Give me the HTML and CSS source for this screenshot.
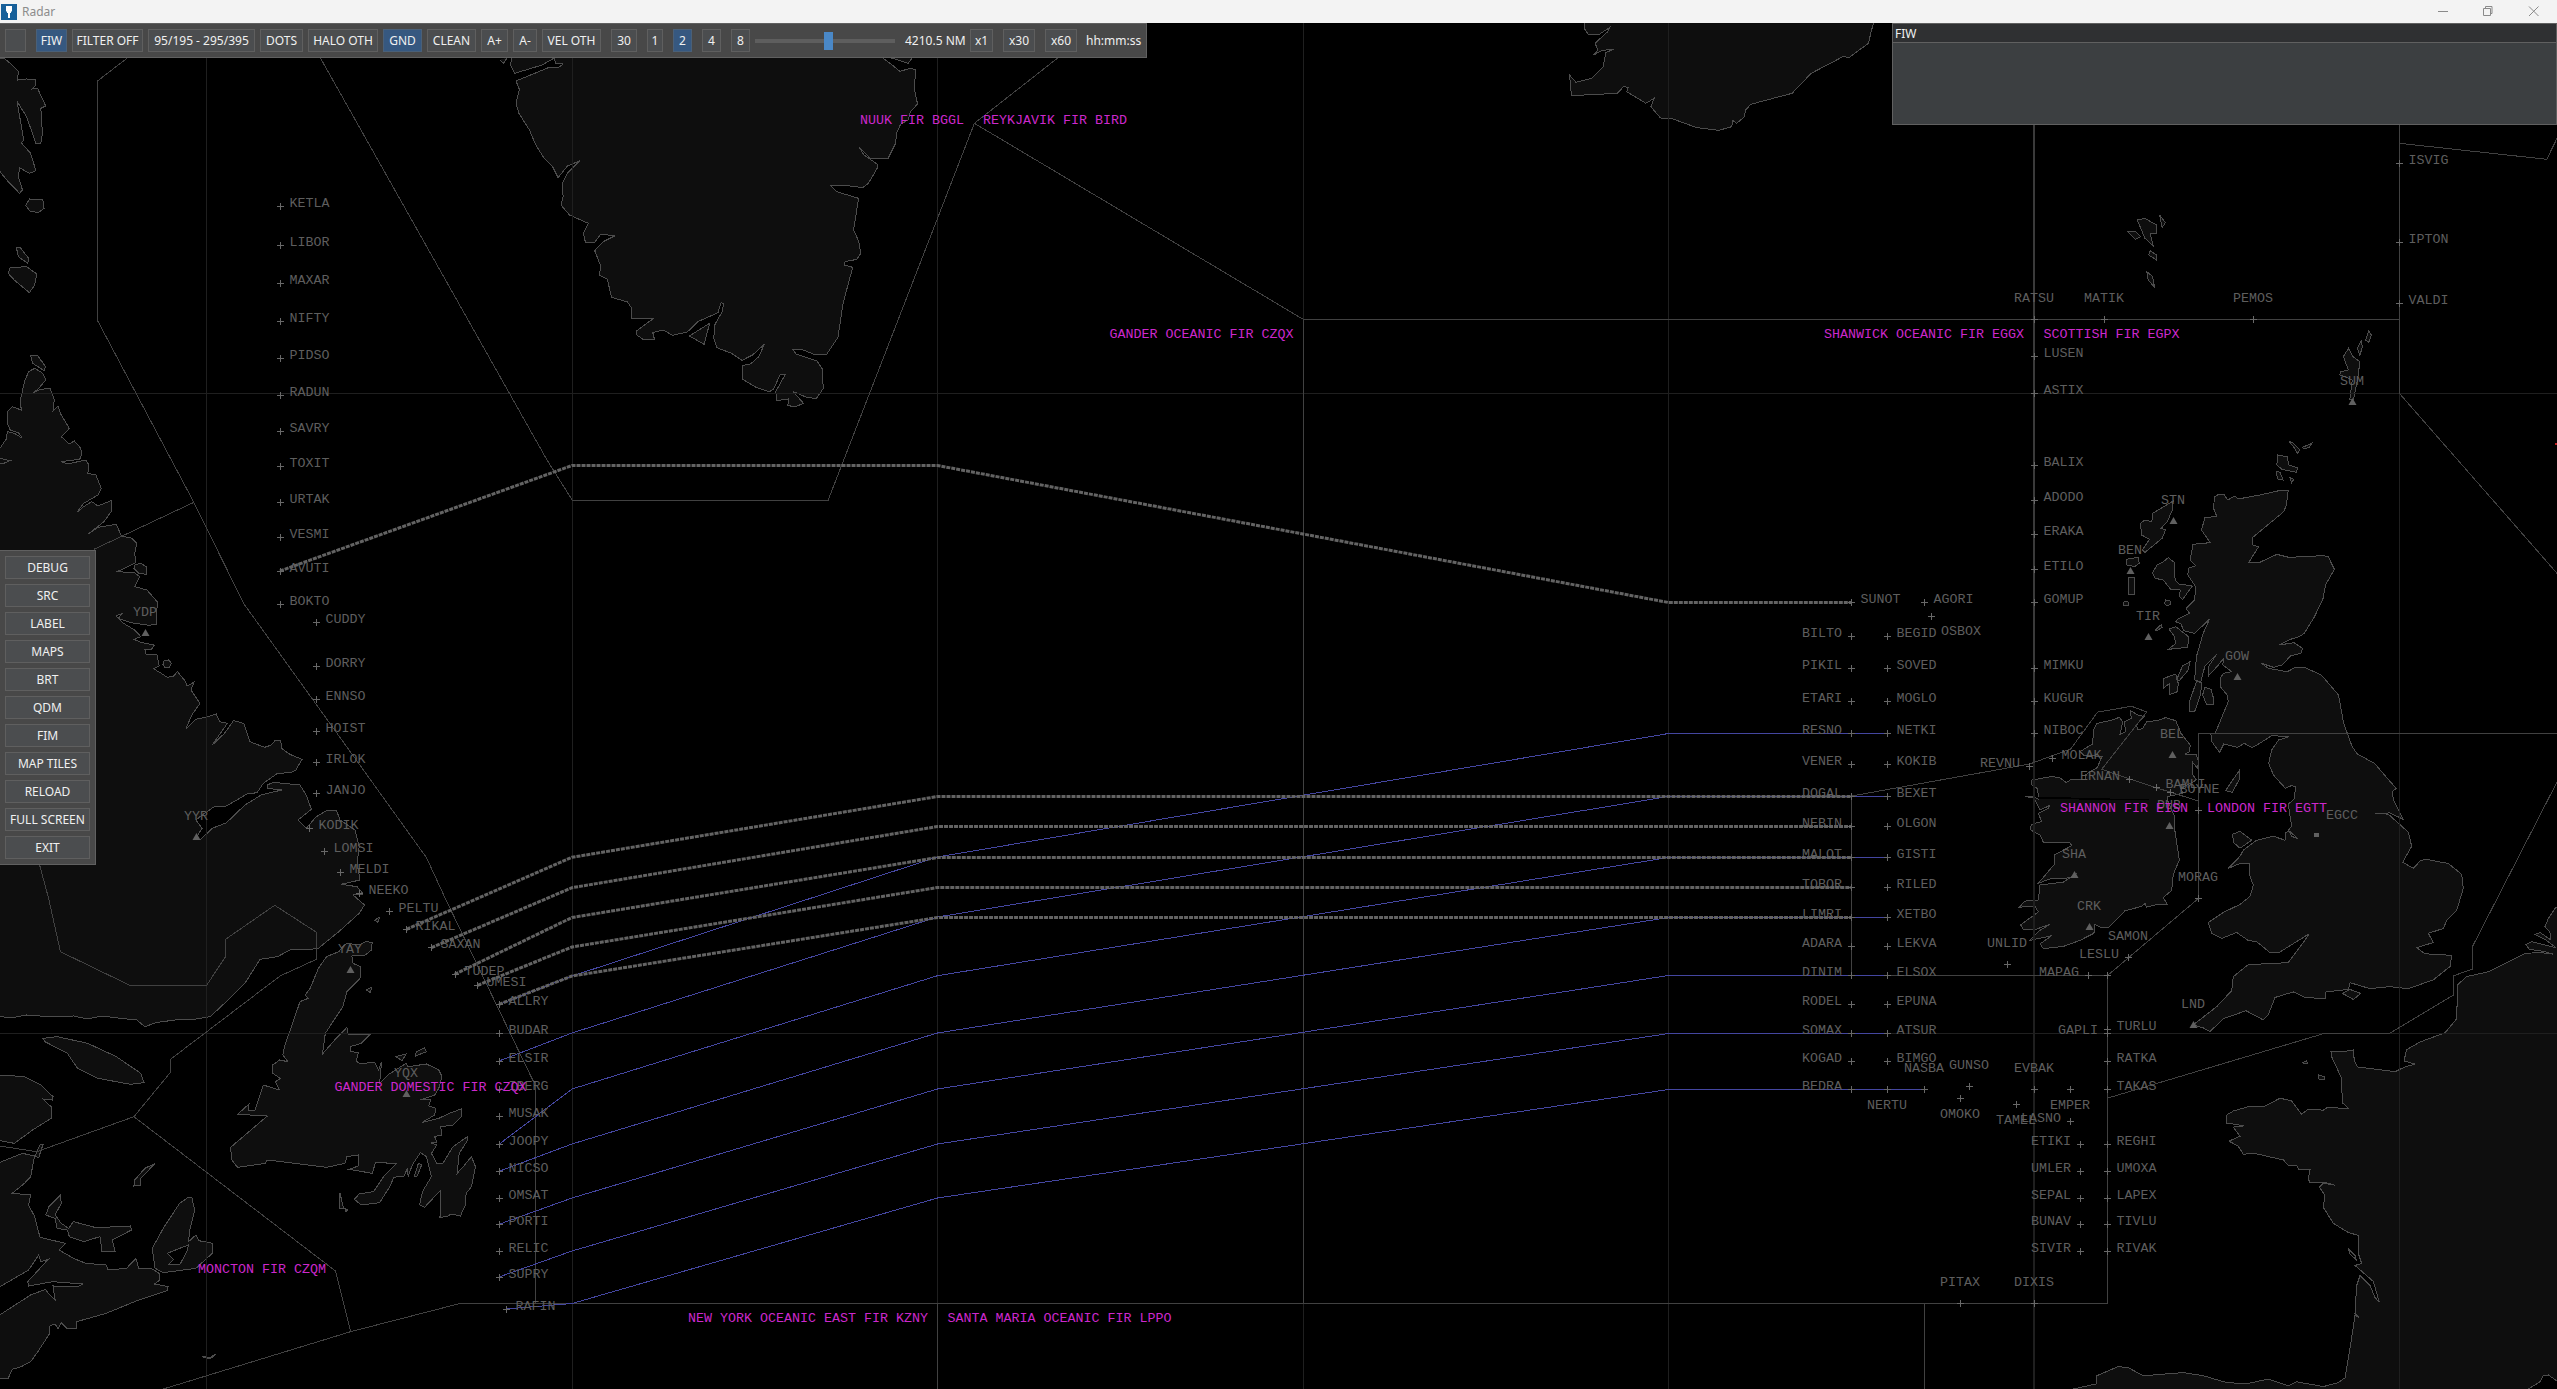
FILE: index.html
```html
<!DOCTYPE html>
<html lang="en">
<head>
<meta charset="utf-8">
<title>Radar</title>
<link rel="stylesheet" href="styles.css">
</head>
<body>
<header class="titlebar">
  <svg class="app-icon" width="16" height="16" viewBox="0 0 16 16"><rect width="16" height="16" fill="#17609a"/><path d="M5 2h6v5l-1 1v1H9v5H7V9H6V8L5 7z" fill="#fff"/></svg>
  <span class="title">Radar</span>
  <svg class="win-buttons" width="104" height="20" viewBox="0 0 104 20" fill="none" stroke="#8a8a8a"><path d="M0 9.500H10"/><path d="M45.500 6.500h7v7h-7z M47.500 6V4.500h6.500v7H53"/><path d="M91 4.500l9.500 9.500M100.500 4.500L91 14"/></svg>
</header>
<main class="scope">
<svg class="map" width="2557" height="1389" viewBox="0 0 2557 1389">
  <g class="land">
    <g transform="scale(.40816 .33333)">
      <path d="M-20 175L10 175 30 195 45 215 43 240 65 237 88 240 88 255 78 267 92 265 112 318 100 325 104 400 100 430 88 430 65 350 42 305 58 420 52 428 75 460 88 512 72 520 48 503 45 530 55 570 48 580 20 545 0 515-20 500"/>
      <path d="M72 597L105 600 108 625 95 637 75 635 63 617z M40 742L50 743 70 775 68 790 45 770z M25 803L65 800 90 822 85 855 72 878 35 840 20 820z M75 1067L92 1067 112 1100 108 1112 80 1090z"/>
    </g>
    <g transform="translate(0 440) scale(.40816 .33333)">
      <path d="M-20 60L0 55 25 62 5 72-20 70 M-20 25L0 25 8 10 15-2 18-25 35-20 55-5 45-22 25-30 18-50 18-85 30-100 52-90 50-120 60-175 70-205 85-215 105-200 112-180 95-155 82-142 100-152 123-155 133-120 130-88 142-102 150-75 170-35 150-10 170 12 182 3 198 25 200 45 195 58 150 65 165 72 210 60 218 75 215 100 235 105 248 145 240 165 205 190 190 215 205 200 225 185 240 198 272 182 272 215 255 245 215 283 240 262 285 253 298 290 320 292 335 310 330 340 333 368 300 388 285 395 330 398 342 410 330 440 360 450 385 485 384 552 365 556 320 548 290 535 300 520 284 528 300 548 330 570 345 590 328 598 345 607 378 615 370 630 355 630 358 642 385 645 390 678 376 686 395 700 410 712 425 708 435 695 455 725 458 738 475 727 468 750 490 790 470 825 455 868 480 838 510 830 530 822 538 845 557 850 540 880 520 915 550 880 572 842 597 850 612 905 648 922 665 915 673 903 688 903 690 925 710 943 740 958 725 990 712 998 680 1000 645 1030 630 1058 605 1062 555 1098 525 1100 495 1125 480 1140 495 1165 480 1195 490 1200 520 1165 555 1148 600 1095 640 1065 690 1050 655 1045 655 1035 670 1027 735 1035 750 1065 763 1108 730 1140 750 1165 775 1130 800 1112 825 1113 833 1140 870 1170 880 1220 875 1270 882 1320 835 1333 875 1340 890 1362 865 1365 893 1395 880 1420 830 1475 780 1525 760 1528 710 1530 680 1550 637 1558 600 1630 550 1690 515 1730 480 1737 430 1740 385 1747 355 1760 335 1740 295 1735 250 1728 215 1737 180 1728 120 1730 65 1725 35 1732-20 1730"/>
      <path d="M330 375L345 370 358 380 358 403 340 400 328 385z M402 663L413 660 420 670 415 682 404 682 399 673z"/>
    </g>
    <g transform="translate(0 900) scale(.40816 .33333)">
      <path d="M800 170L830 155 840 140 850 130 880 135 895 125 912 127 910 150 895 165 862 168 865 190 883 200 882 235 850 275 840 320 797 400 790 462 820 420 850 382 853 405 908 402 885 430 858 440 858 455 878 457 873 483 880 490 918 488 928 510 935 485 930 550 950 525 995 490 1000 500 1045 492 1075 510 1083 530 1075 565 1065 585 1030 600 1055 600 1050 618 1068 625 1065 645 1035 667 1075 655 1105 638 1130 627 1130 650 1110 675 1080 680 1082 705 1065 710 1070 727 1055 728 1070 735 1057 760 1070 790 1085 790 1110 740 1145 710 1145 722 1125 760 1120 820 1135 800 1155 770 1165 800 1155 860 1142 880 1140 915 1128 948 1105 942 1095 950 1078 952 1080 870 1040 922 1028 915 1035 875 1057 830 1045 770 1030 758 1010 795 1000 830 998 805 990 828 965 832 955 860 930 908 885 915 868 898 880 882 915 875 940 830 972 790 920 788 912 820 855 808 878 798 878 765 850 770 845 790 800 802 735 792 655 780 650 790 582 802 568 780 565 742 655 648 582 643 610 612 608 632 625 630 645 555 685 570 675 545 687 535 668 520 668 495 685 480 705 485 693 465 697 440 735 305 755 295 748 285 760 265 780 205z"/>
      <path d="M105 415L140 410 215 430 285 470 345 520 353 548 320 553 240 535 190 505 165 460 110 425z M-20 525L0 525 60 530 100 555 130 590 128 600 105 597 125 620 125 655 80 690 35 730 0 722-20 722"/>
      <path d="M-20 785L0 787 55 760 85 768 75 830 60 850 30 880 75 885 70 915 85 950 98 1012 160 1030 145 1050 180 1075 210 1090 260 1095 265 1110 310 1105 333 1075 340 1105 370 1105 390 1120 392 1140 378 1152 412 1160 410 1172 340 1200 260 1240 188 1265 188 1285 165 1287 150 1268 142 1287 135 1272 122 1278 122 1300 90 1360 75 1385 52 1400 30 1408 20 1435-20 1435"/>
      <path class="water" d="M-20 1170L0 1160 70 1110 95 1065 100 1085 118 1078 68 1145 70 1158 130 1145 203 1152 190 1160 130 1158 135 1200 118 1180 112 1168 75 1185-20 1260"/>
      <path d="M148 885L150 910 135 945 150 970 168 985 180 965 235 983 320 978 322 990 275 1020 282 1055 250 1055 245 1010 205 1025 170 1010 165 990 140 985 135 955 112 945 120 920z M460 893L470 893 477 930 465 990 462 1025 480 1005 487 1022 520 1030 520 1060 480 1105 400 1118 380 1105 373 1045 400 985 440 910z"/>
      <path class="water" d="M410 1060L440 1045 462 1035 458 1055 440 1095 412 1095 425 1078z"/>
      <path d="M380 790L345 835 345 855 328 858 330 840 355 805z M833 880L842 925 832 925z M845 925L852 930 847 935z M970 470L995 462 985 482z M1020 455L1040 443 1045 455 1018 468z M918 60L930 52 925 68z M898 270L910 262 908 278z M495 1370L515 1372 530 1362 515 1376z M85 770L98 735 105 735 95 772z M1015 830L1025 790 1033 795 1022 828z"/>
    </g>
    <g transform="translate(500 0) scale(.42092 .33333)">
      <path d="M128 170L132 190 150 192 140 202 115 203 38 243 46 268 38 310 45 340 70 390 85 435 105 475 125 500 138 533 160 498 190 482 160 520 148 550 150 590 145 615 165 645 210 670 198 700 203 727 225 727 240 702 272 708 245 725 225 752 240 800 235 825 255 838 265 892 303 906 313 925 313 955 365 955 325 992 325 1005 340 1018 367 1018 363 998 388 990 410 1006 445 996 470 965 518 938 525 908 531 910 528 935 510 975 508 1015 515 1043 550 1060 575 1081 600 1065 628 1033 615 1070 595 1092 575 1097 575 1137 610 1163 640 1175 650 1168 665 1125 677 1125 655 1175 658 1202 685 1197 684 1217 702 1220 721 1210 697 1175 730 1193 752 1195 768 1165 765 1105 753 1083 703 1062 697 1050 720 1050 750 1065 775 1065 803 1012 815 910 838 802 818 795 820 785 848 778 857 760 852 723 840 690 852 595 800 575 785 557 825 557 862 563 875 550 897 503 897 493 865 465 852 440 880 475 922 475 940 430 942 400 952 372 970 360 975 335 992 312 984 265 988 210 975 205 950 214 930 193 905 170"/>
      <path d="M28 170L25 195 35 220 100 195 132 172 M0 180L8 190 18 172 M925 172L970 190 980 172 M498 970L450 1008 485 1033z"/>
    </g>
    <g transform="translate(1560 0) scale(.63584 .33333)">
      <path d="M40 60L38 85 45 105 60 105 78 83 75 95 55 130 60 150 53 165 65 152 85 147 72 158 68 200 50 235 25 247 15 225 18 287 90 280 100 260 107 262 105 275 135 310 148 295 143 320 158 354 175 355 215 383 250 391 270 380 272 362 278 370 290 350 292 330 300 313 345 290 365 280 395 220 445 170 455 172 485 130 490 90 495 60"/>
      <path d="M908 660L920 655 938 675 938 700 928 700 933 738 920 715z M893 695L905 695 913 710 905 718z M943 645L952 668 947 683z M928 752L938 765 938 780 926 765z M923 815L932 830 935 862 925 840z"/>
      <path d="M1272 993L1276 1005 1272 1027 1267 1020z M1260 1022L1262 1040 1258 1066 1254 1045z M1240 1045L1247 1070 1258 1085 1255 1130 1248 1200 1242 1200 1246 1140 1235 1130 1226 1125 1228 1115 1240 1110 1232 1070z"/>
    </g>
    <g transform="translate(2020 400) scale(.34247 .33333)">
      <path d="M800 1200L805 1160 792 1157 775 1165 740 1125 726 1090 735 1050 755 1020 785 1010 735 1007 700 1030 678 1043 655 1030 635 1042 595 1032 583 1057 560 1025 557 1000 570 1000 608 905 605 885 585 860 587 830 595 820 618 815 592 795 595 775 575 800 550 828 550 800 575 762 540 798 528 845 510 840 515 770 535 700 553 658 510 700 478 692 470 672 455 665 460 658 495 640 485 625 510 600 513 560 490 525 492 505 513 497 497 480 505 433 555 428 530 390 540 352 575 350 565 325 568 290 580 283 595 283 607 300 627 288 637 297 700 285 765 270 783 272 778 315 770 335 680 412 680 435 697 440 668 487 700 487 750 463 785 472 885 467 900 470 918 508 892 555 885 595 860 650 830 700 815 710 790 718 757 735 800 728 825 745 820 760 790 768 765 795 740 802 705 790 725 805 780 815 805 802 830 802 880 825 930 885 945 970 970 1040 985 1062 1035 1090 1098 1165 1088 1175 1090 1200"/>
      <path d="M55 1190L50 1165 35 1155 35 1140 90 1130 115 1132 135 1148 150 1138 192 1140 190 1125 225 1103 240 1070 185 1065 175 1055 212 1032 215 990 225 970 270 960 290 952 300 965 292 1003 308 995 305 965 325 955 322 932 345 945 362 950 340 975 345 990 358 985 370 965 400 962 425 953 455 962 470 1000 497 1035 495 1055 482 1062 515 1065 522 1085 518 1105 505 1088 505 1125 515 1140 470 1165 475 1180 430 1190 430 1200"/>
      <path d="M600 1172L640 1112 642 1135 620 1177z M447 303L445 330 430 365 412 385 425 390 415 415 365 457 357 450 378 418 355 405 352 370 365 360 385 365 387 340z M310 478L345 472 348 490 335 500 312 495z M316 532L333 532 335 585 318 585z M304 605L315 603 317 617 302 618z M425 600L438 602 440 612 430 618 422 610z M433 473L450 487 453 540 465 552 503 558 475 598 465 590 468 570 440 568 418 540 395 535 387 518 400 495 415 488z M395 690L413 673 415 682 400 692z M435 687L455 680 492 710 490 742 433 748 455 730 450 708z M497 785L490 812 465 842 458 838 475 797z M455 822L462 850 460 875 438 883 437 850 418 865 420 835z M515 845L530 847 528 880 510 935 495 935 495 905z M540 862L558 868 565 895 565 913 545 913 533 885z M752 165L780 170 785 195 810 203 808 217 765 208 750 195z M748 213L760 218 768 240 752 237z M788 232L799 238 793 249z M785 123L797 128 817 150 810 160 800 142z M825 142L852 130 845 142 830 147z"/>
    </g>
    <g transform="translate(1780 760) scale(.33333 .35714)">
      <path d="M776 110L765 105 735 103 760 103 780 140 810 127 805 135 775 150 785 172 755 180 750 195 780 210 790 230 870 232 875 240 825 265 825 290 775 345 810 333 870 330 890 318 850 342 780 350 775 392 735 395 718 412 765 410 775 425 722 462 730 475 765 475 810 460 775 480 750 505 815 492 780 515 790 528 850 522 900 505 942 485 943 460 960 468 985 470 1035 422 1085 410 1095 402 1100 412 1130 405 1162 405 1150 385 1175 365 1180 320 1198 280 1185 200 1185 160 1175 140 1162 112"/>
    </g>
    <g transform="translate(2040 760) scale(.33333 .40115)">
      <path d="M762 98L745 110 750 140 755 165 745 175 775 197 755 190 748 178 738 180 735 200 700 190 650 200 610 225 600 240 565 270 600 258 628 258 630 290 640 312 630 340 600 360 550 380 505 405 515 432 545 445 590 430 625 450 650 453 690 480 717 480 808 433 790 455 745 505 705 507 625 510 580 540 575 575 530 615 460 660 490 668 510 677 550 645 618 625 670 648 685 635 705 592 760 578 795 592 855 595 858 578 925 572 930 555 990 570 1050 565 1105 570 1180 548 1230 515 1235 487 1155 483 1130 468 1180 455 1165 432 1210 420 1220 400 1250 375 1270 320 1265 285 1225 258 1155 247 1140 252 1120 270 1088 255 1115 215 1105 180 1045 135 1005 133 1050 132 1090 148 1060 98"/>
      <path d="M578 185L600 178 635 200 600 220 580 205z M908 582L930 572 962 582 940 597z M835 785L855 790 852 797 835 795z M788 755L800 750 803 757z"/>
      <path d="M100 1700L100 1568 170 1555 170 1535 235 1512 265 1515 310 1535 430 1527 490 1535 560 1552 620 1555 685 1543 745 1560 770 1550 850 1562 895 1552 915 1540 935 1440 945 1385 958 1390 945 1380 950 1310 960 1285 990 1310 1005 1340 1018 1352 1000 1300 945 1260 965 1255 955 1230 955 1185 925 1178 880 1155 850 1115 855 1085 838 1065 850 1055 885 1060 850 1052 810 1053 805 1045 810 1022 775 1020 770 1010 745 1010 730 997 640 980 610 983 595 963 567 950 600 938 580 915 612 912 560 905 560 885 580 875 630 863 675 863 720 843 755 850 785 883 805 870 850 873 860 867 925 868 908 855 903 790 875 740 873 727 910 727 940 723 943 750 952 765 1065 777 1095 765 1125 758 1092 750 1100 722 1140 703 1215 680 1250 645 1253 560 1280 540 1345 528 1455 482 1500 480 1540 484 1510 477 1468 472 1458 460 1475 453 1510 460 1548 468 1515 447 1485 435 1500 430 1532 448 1530 430 1515 415 1525 395 1545 370 1600 340 1600 1700z"/>
      <path class="water" d="M925 1218L945 1235 948 1245 930 1232z M1465 1568L1500 1550 1510 1535 1525 1533 1551 1548 1600 1600 1465 1600"/>
    </g>
  </g>
  <path class="grid" d="M206.500 23V1389M572.500 23V1389M937.500 23V1389M1303.500 23V1389M1668.500 23V1389M2399.500 23V1389M0 393.500H2557M0 1033.500H2557"/>
  <path class="grid wide" d="M2034 23V1389"/>
  <path class="fir wide" d="M2034 125V763"/>
  <path class="fir" d="M128.600 57L97.500 81V320.500L193.900 502.500 244 604 426.500 857.700 446 900 532.700 1080 535.500 1083V1303M94 549.300L193.900 502.300M320.400 58L547 460 572.500 500.500H828L974.400 123.300 1057.700 58M974.400 123.300L1303.500 319.500H2399.500M1303.500 319.500V1303M1851.500 796L2029.700 764 2070.700 749 2097.700 712 2131.700 706.300 2146.700 712 2101.700 769.300 2129.700 779 2156.300 787.700 2198.300 801M1851.500 796V975.500H2107.500L2198.500 898.400V733.500H2557M2107.500 975.500V1303.500H460L350.600 1331.700 163.300 1389M1924.500 1303V1389M937.500 1303V1389M350.600 1331.700L335.500 1271 133.900 1116.700 36.700 1151.700 0 1146M133.900 1116.700L170.500 1072.300V1059.300L280 976 316.500 959.300V932.300L274.700 905.300 225.500 939.300V956.700L206.500 985.500H130.200L60.400 951.700 49 900 39.600 865M2108 1098L2324 1033.500H2389.300L2453.500 995V975.800L2472.500 969V946.500L2557 782M2399.500 143.300L2546.800 159.300 2557 138.300M2399.500 125V393.500L2557 573.300"/>
  <path class="track-blue" d="M572 976L937.500 857 1668.500 733.500H1887M499 1061L572 1033 937.500 917 1668.500 796.500H1887M499 1144.300L572 1089 937.500 975.700 1668.500 857.500H1887M499 1171.300L572 1144 937.500 1033 1668.500 917.500H1887M499 1224.300L572 1198 937.500 1089 1668.500 975.500H1887M499 1277L572 1251 937.500 1144 1668.500 1033.500H1887M506 1309L572 1303.500 937.500 1198 1668.500 1089.500H1924M499 1004.500L572 976"/>
  <path class="track-grey" d="M280 571L572 465.500H937.500L1668.500 602.500H1851.500M406.500 929.300L572 857.300 937.500 796.500H1851.500M431.400 947.700L572 887.700 937.500 826.500H1851.500M454.700 974.300L572 917.500 937.500 857.500H1851.500M477.600 985.300L572 947 937.500 887.500H1851.500M499 1004.300L572 976 937.500 917.500H1851.500"/>
  <path class="alert" d="M2555 444H2557"/>
  <g id="fixes"></g>
  <g class="fir-name">
    <text x="860" y="124">NUUK FIR BGGL</text>
    <text x="983" y="124">REYKJAVIK FIR BIRD</text>
    <text x="1109.500" y="338">GANDER OCEANIC FIR CZQX</text>
    <text x="1824" y="338">SHANWICK OCEANIC FIR EGGX</text>
    <text x="2043.500" y="338">SCOTTISH FIR EGPX</text>
    <text x="2060" y="812">SHANNON FIR EISN</text>
    <text x="2207" y="812">LONDON FIR EGTT</text>
    <text x="334.500" y="1091">GANDER DOMESTIC FIR CZQX</text>
    <text x="198" y="1273">MONCTON FIR CZQM</text>
    <text x="688" y="1322">NEW YORK OCEANIC EAST FIR KZNY</text>
    <text x="947.500" y="1322">SANTA MARIA OCEANIC FIR LPPO</text>
  </g>
</svg>

<nav class="toolbar">
  <button class="w21"></button>
  <button class="w31 on split">FIW</button>
  <button class="w71">FILTER OFF</button>
  <button class="w107">95/195 - 295/395</button>
  <button class="w43">DOTS</button>
  <button class="w70">HALO OTH</button>
  <button class="w39 on">GND</button>
  <button class="w49">CLEAN</button>
  <button class="w27">A+</button>
  <button class="w24">A-</button>
  <button class="w59">VEL OTH</button>
  <button class="w26 split">30</button>
  <button class="w16 split">1</button>
  <button class="w19 on split">2</button>
  <button class="w19 split">4</button>
  <button class="w19 split">8</button>
  <div class="slider"><i class="thumb"></i></div>
  <span class="range">4210.5 NM</span>
  <button class="w23">x1</button>
  <button class="w32 split">x30</button>
  <button class="w32 split">x60</button>
  <span class="clock">hh:mm:ss</span>
</nav>

<aside class="side">
  <button>DEBUG</button><button>SRC</button><button>LABEL</button><button>MAPS</button><button>BRT</button><button>QDM</button><button>FIM</button><button>MAP TILES</button><button>RELOAD</button><button>FULL SCREEN</button><button>EXIT</button>
</aside>

<section class="fiw"><h2>FIW</h2></section>
</main>
<script src="fixes.js"></script>
</body>
</html>
```
FILE: styles.css
```css
* { box-sizing: border-box; }
body {
  margin: 0;
  width: 2557px;
  height: 1389px;
  overflow: hidden;
  background: #000;
  font: 12px "Noto Sans", "Open Sans", sans-serif;
  color: #f0f0f0;
  position: relative;
}
.titlebar {
  position: relative;
  z-index: 1;
  height: 23px;
  background: #f3f3f3;
  display: flex;
  align-items: center;
  padding: 0 15px 0 1px;
}
.title { margin-left: 5px; color: #8c8c8c; flex: 1; }
.scope { display: block; }
.map { position: absolute; left: 0; top: 0; display: block; }
.land path {
  fill: #0e0e0e;
  stroke: #4c4c4c;
  stroke-width: 1;
  vector-effect: non-scaling-stroke;
  shape-rendering: crispEdges;
}
.land path.water { fill: #000; }
.grid, .fir, .track-blue { fill: none; stroke-width: 1; shape-rendering: crispEdges; }
.grid { stroke: #1f1f1f; }
.fir { stroke: #414141; }
.wide { stroke-width: 2; }
.fir.wide { stroke: #3a3a3a; }
.track-blue { stroke: #4446a0; }
.track-grey { fill: none; stroke: #636363; stroke-width: 3; stroke-dasharray: 4 1; }
.alert { stroke: #c02020; stroke-width: 2; }
.fix-mark { stroke: #686868; fill: none; shape-rendering: crispEdges; }
.beacon { fill: #606060; }
.fix-name, .fir-name text {
  font: 13.333px "Liberation Mono", monospace;
  fill: #5e5e5e;
  white-space: pre;
}
.fir-name text { fill: #cc28cc; }
button {
  font: inherit;
  color: inherit;
  background: #4b4d4f;
  border: 1px solid #5f5f5f;
  border-radius: 0;
  height: 23px;
  padding: 0;
  line-height: 20px;
  white-space: nowrap;
  text-align: center;
  flex: none;
}
button.on { background: #365880; border-color: #4a6078; }
.toolbar {
  position: absolute;
  left: 0;
  top: 23px;
  width: 1147px;
  height: 35px;
  display: flex;
  align-items: center;
  gap: 5px;
  padding-left: 5px;
  background: #484848;
  border: solid #606060;
  border-width: 1px 1px 1px 0;
}
.split { margin-left: 5px; }
.w16 { width: 16px; } .w19 { width: 19px; } .w21 { width: 21px; } .w23 { width: 23px; }
.w24 { width: 24px; } .w26 { width: 26px; } .w27 { width: 27px; } .w31 { width: 31px; }
.w32 { width: 32px; } .w39 { width: 39px; } .w43 { width: 43px; } .w49 { width: 49px; }
.w59 { width: 59px; } .w70 { width: 70px; } .w71 { width: 71px; } .w107 { width: 107px; }
.slider {
  width: 140px;
  height: 18px;
  flex: none;
  padding-left: 69px;
  background: linear-gradient(#5e5e5e, #5e5e5e) 0 50% / 100% 4px no-repeat;
}
.thumb { display: block; width: 9px; height: 18px; background: #4a88c7; }
.range { width: 60px; margin-left: 5px; white-space: nowrap; }
.clock { margin-left: 4px; }
.side {
  position: absolute;
  left: 0;
  top: 550px;
  width: 96px;
  height: 315px;
  display: grid;
  gap: 5px;
  align-content: start;
  padding: 5px;
  background: #484848;
  border: solid #606060;
  border-width: 1px 1px 1px 0;
}
.side button { width: 85px; }
.fiw {
  position: absolute;
  left: 1892px;
  top: 23px;
  width: 665px;
  height: 102px;
  background: #3c3f41;
  border: 1px solid #606060;
}
.fiw h2 {
  margin: 0;
  height: 19px;
  padding-left: 2px;
  font: 12px/19px "Noto Sans", sans-serif;
  background: #2f3032;
  border-bottom: 1px solid #606060;
}
```
FILE: fixes.js
```js
// name, x, y, label side: r right, l left, a above, b below
const fixes = `KETLA 280 206 r;LIBOR 280 245 r;MAXAR 280 283 r;NIFTY 280 321 r;PIDSO 280 358 r;RADUN 280 395 r;SAVRY 280 431 r;TOXIT 280 466 r;URTAK 280 502 r;VESMI 280 537 r;AVUTI 280 571 r;BOKTO 280 604 r
CUDDY 316 622 r;DORRY 316 666 r;ENNSO 316 699 r;HOIST 316 731 r;IRLOK 316 762 r;JANJO 316 793 r;KODIK 309 828 r;LOMSI 324 851 r;MELDI 340 872 r;NEEKO 359 893 r;PELTU 389 911 r
RIKAL 406 929 r;SAXAN 431 947 r;TUDEP 455 974 r;UMESI 477 985 r;ALLRY 499 1004 r;BUDAR 499 1033 r;ELSIR 499 1061 r;IBERG 499 1089 r;MUSAK 499 1116 r;JOOPY 499 1144 r;NICSO 499 1171 r;OMSAT 499 1198 r;PORTI 499 1224 r;RELIC 499 1251 r;SUPRY 499 1277 r;RAFIN 506 1309 r
RATSU 2034 319 a;MATIK 2104 319 a;PEMOS 2253 319 a;ISVIG 2399 163 r;IPTON 2399 242 r;VALDI 2399 303 r;LUSEN 2034 356 r;ASTIX 2034 393 r;BALIX 2034 465 r;ADODO 2034 500 r;ERAKA 2034 534 r;ETILO 2034 569 r;GOMUP 2034 602 r;MIMKU 2034 668 r;KUGUR 2034 701 r;NIBOC 2034 733 r
SUNOT 1851 602 r;AGORI 1924 602 r;BILTO 1851 636 l;PIKIL 1851 668 l;ETARI 1851 701 l;RESNO 1851 733 l;VENER 1851 764 l;DOGAL 1851 796 l;NEBIN 1851 826 l;MALOT 1851 857 l;TOBOR 1851 887 l;LIMRI 1851 917 l;ADARA 1851 946 l;DINIM 1851 975 l;RODEL 1851 1004 l;SOMAX 1851 1033 l;KOGAD 1851 1061 l;BEDRA 1851 1089 l
BEGID 1887 636 r;SOVED 1887 668 r;MOGLO 1887 701 r;NETKI 1887 733 r;KOKIB 1887 764 r;BEXET 1887 796 r;OLGON 1887 826 r;GISTI 1887 857 r;RILED 1887 887 r;XETBO 1887 917 r;LEKVA 1887 946 r;ELSOX 1887 975 r;EPUNA 1887 1004 r;ATSUR 1887 1033 r;BIMGO 1887 1061 r
REVNU 2029 766 l;MOLAK 2052 758 r;ERNAN 2129 779 l;BAMLI 2156 787 r;BOYNE 2170 792 r;NERTU 1887 1089 b;NASBA 1924 1089 a;GUNSO 1969 1086 a;OMOKO 1960 1098 b;EVBAK 2034 1089 a;EMPER 2070 1089 b;TAMEL 2016 1104 b;LASNO 2070 1121 l;ETIKI 2080 1144 l;UMLER 2080 1171 l;SEPAL 2080 1198 l;BUNAV 2080 1224 l;SIVIR 2080 1251 l
REGHI 2107 1144 r;UMOXA 2107 1171 r;LAPEX 2107 1198 r;TIVLU 2107 1224 r;RIVAK 2107 1251 r;UNLID 2007 964 a;MAPAG 2088 975 l;GAPLI 2107 1033 l;TURLU 2107 1029 r;RATKA 2107 1061 r;TAKAS 2107 1089 r;PITAX 1960 1303 a;DIXIS 2034 1303 a;LESLU 2128 957 l;SAMON 2128 957 a;MORAG 2198 898 a`
  .split(/[;\n]/).map(s => s.trim().split(' '));

const beacons = [['YDP', 145, 633], ['YYR', 196, 837], ['YAY', 350, 970], ['YQX', 406, 1094], ['SUM', 2352, 402],
  ['STN', 2173, 521], ['BEN', 2130, 571], ['TIR', 2148, 637], ['GOW', 2237, 677], ['BEL', 2172, 755],
  ['DUB', 2169, 826], ['SHA', 2074, 875], ['CRK', 2089, 927], ['LND', 2193, 1025]];

const layer = document.getElementById('fixes');
const add = (tag, attrs, text) => {
  const el = document.createElementNS('http://www.w3.org/2000/svg', tag);
  for (const k in attrs) el.setAttribute(k, attrs[k]);
  if (text) el.textContent = text;
  layer.append(el);
};
const label = (name, x, y, anchor) => add('text', { class: 'fix-name', x, y, 'text-anchor': anchor }, name);
const cross = (x, y) => add('path', { class: 'fix-mark', d: `M${x - 3} ${y + .5}h7M${x + .5} ${y - 3}v7` });

for (const [name, sx, sy, side] of fixes) {
  const x = +sx, y = +sy;
  cross(x, y);
  if (side === 'r') label(name, x + 9.5, y + 1, 'start');
  if (side === 'l') label(name, x - 9, y + 1, 'end');
  if (side === 'a') label(name, x, y - 17, 'middle');
  if (side === 'b') label(name, x, y + 20, 'middle');
}
cross(1931, 616);
label('OSBOX', 1941, 635, 'start');
cross(2107, 975);
cross(2198, 810);
for (const [name, x, y] of beacons) {
  add('path', { class: 'beacon', d: `M${x + .5} ${y - 4}l4 7h-8z` });
  label(name, x, y - 17, 'middle');
}
add('path', { class: 'beacon', d: 'M2314 833h5v4h-5z' });
label('EGCC', 2326, 819, 'start');
```
